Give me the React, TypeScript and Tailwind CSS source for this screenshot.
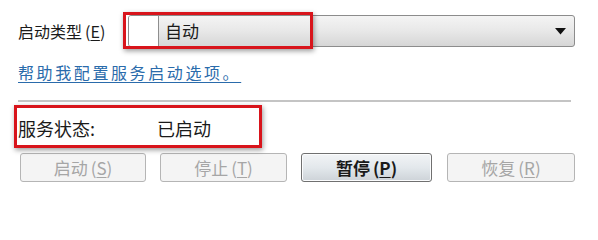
import React from "react";

const FONT = "font-['Noto_Sans_CJK_SC',_'Noto_Sans',_sans-serif]";

function Key({ k }: { k: string }) {
  return (
    <span className="ml-[3px]">
      (<span className="underline underline-offset-2">{k}</span>)
    </span>
  );
}

function Btn({
  label,
  k,
  width,
  enabled,
}: {
  label: string;
  k: string;
  width: string;
  enabled?: boolean;
}) {
  return (
    <button
      type="button"
      className={
        enabled
          ? `${width} h-[29px] rounded-[3px] border border-[#707070] bg-gradient-to-b from-[#f2f4f6] via-[#e3e8ec] to-[#cdd3d8] text-[17px] font-bold text-[#1a1a1a] shadow-[inset_0_0_0_1px_#fbfcfd]`
          : `${width} h-[29px] rounded-[3px] border border-[#b5b5b5] bg-[#f4f4f4] text-[17px] text-[#a6a6a6]`
      }
    >
      {label}
      <Key k={k} />
    </button>
  );
}

export default function App() {
  return (
    <div className={`${FONT} relative h-[202px] w-[598px] overflow-hidden bg-white text-[#1a1a1a]`}>
      {/* startup type */}
      <div className="flex items-center pl-[18px] pt-[15px]">
        <div className="w-[110px] text-[16px] leading-[32px]">
          启动类型
          <Key k="E" />
        </div>
        <div className="flex h-[32px] w-[447px] items-stretch overflow-hidden rounded-[3px] border border-[#8c8c8c] bg-gradient-to-b from-[#f4f4f4] via-[#e8e8e8] to-[#d6d6d6]">
          <div className="w-[30px] border-r border-[#8e8e8e] bg-white" />
          <div className="flex flex-1 items-center pl-[6px] text-[17px]">自动</div>
          <div className="flex w-[28px] items-center justify-center">
            <svg width="11" height="7" viewBox="0 0 11 7">
              <path d="M0 0h11L5.5 6.5z" fill="#111" />
            </svg>
          </div>
        </div>
      </div>

      <div className="pl-[18px] mt-[14px] h-[22px] text-[16px] leading-[22px] tracking-[2.6px] text-[#2a6bab] underline underline-offset-[3px]">
        帮助我配置服务启动选项。
      </div>

      <div className="ml-[18px] mt-[17px] h-[2px] w-[553px] bg-[#c4c4c4]" />

      <div className="flex pl-[18px] mt-[14px] h-[24px] text-[18px] leading-[24px]">
        <span className="w-[139px]">服务状态:</span>
        <span>已启动</span>
      </div>

      <div className="ml-[20px] mt-[13px] flex">
        <Btn label="启动" k="S" width="w-[126px]" />
        <div className="w-[14px]" />
        <Btn label="停止" k="T" width="w-[127px]" />
        <div className="w-[14px]" />
        <Btn label="暂停" k="P" width="w-[131px]" enabled />
        <div className="w-[15px]" />
        <Btn label="恢复" k="R" width="w-[128px]" />
      </div>

      {/* red highlight boxes */}
      <div className="absolute left-[123px] top-[12px] h-[37px] w-[190px] border-[3px] border-[#d8141b] shadow-[1px_2px_5px_rgba(0,0,0,0.4)]" />
      <div className="absolute left-[14px] top-[105px] h-[43px] w-[248px] border-[3px] border-[#d8141b] shadow-[1px_2px_5px_rgba(0,0,0,0.4)]" />
    </div>
  );
}
